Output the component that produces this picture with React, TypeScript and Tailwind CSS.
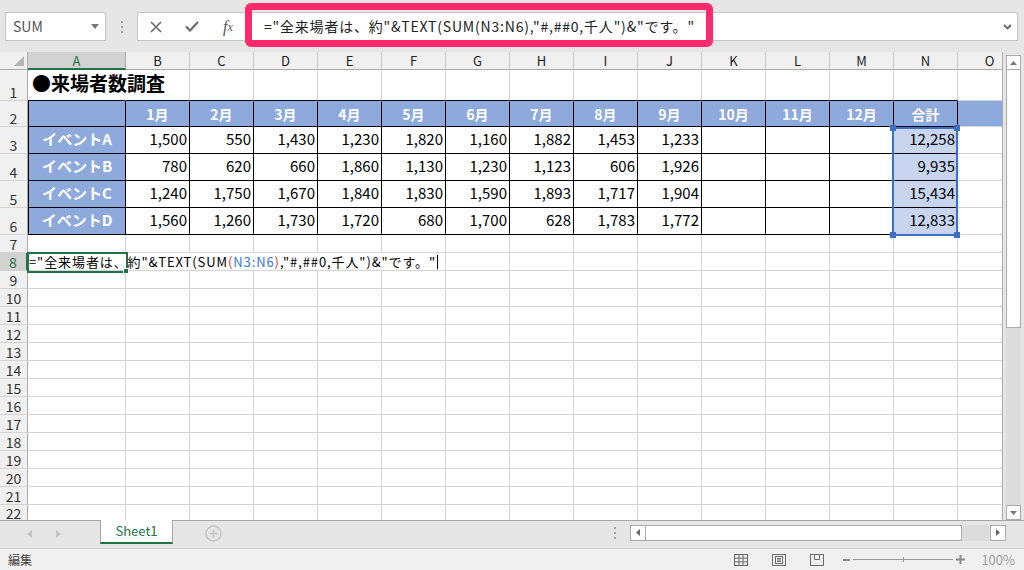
import React from 'react';

const COLS = ['A', 'B', 'C', 'D', 'E', 'F', 'G', 'H', 'I', 'J', 'K', 'L', 'M', 'N', 'O'];
const MONTHS = ['1月', '2月', '3月', '4月', '5月', '6月', '7月', '8月', '9月', '10月', '11月', '12月', '合計'];
const EVENTS: [string, string[]][] = [
  ['イベントA', ['1,500', '550', '1,430', '1,230', '1,820', '1,160', '1,882', '1,453', '1,233', '', '', '', '12,258']],
  ['イベントB', ['780', '620', '660', '1,860', '1,130', '1,230', '1,123', '606', '1,926', '', '', '', '9,935']],
  ['イベントC', ['1,240', '1,750', '1,670', '1,840', '1,830', '1,590', '1,893', '1,717', '1,904', '', '', '', '15,434']],
  ['イベントD', ['1,560', '1,260', '1,730', '1,720', '680', '1,700', '628', '1,783', '1,772', '', '', '', '12,833']],
];
const ROW_COUNT = 22;

/** border colours for a sheet cell: black frame around A2:N6, light gridlines elsewhere */
function borderClass(r: number, c: number) {
  const inTable = r >= 2 && r <= 6 && c <= 13;
  if (inTable && c === 0) return 'border-r border-b border-l border-r-black border-b-black border-l-black';
  if (inTable) return 'border-r border-b border-r-black border-b-black';
  if (r === 1 && c === 0) return 'border-r border-b border-r-white border-b-black';
  if (r === 1 && c <= 13) return 'border-r border-b border-r-[#d4d4d4] border-b-black';
  return 'border-r border-b border-r-[#d4d4d4] border-b-[#d4d4d4]';
}

function CellContent({ r, c }: { r: number; c: number }) {
  if (r === 1 && c === 0) {
    return (
      <div className="relative z-10 flex h-full items-end whitespace-nowrap pb-[5px] pl-[4px] text-[19px] font-bold leading-[24px]">
        ●来場者数調査
      </div>
    );
  }
  if (r === 2) {
    return (
      <div className="flex h-full items-end justify-center bg-[#8ea9db] pb-[2px] text-[14px] font-bold leading-[20px] text-white">
        {c === 0 ? '' : MONTHS[c - 1]}
      </div>
    );
  }
  if (r >= 3 && r <= 6) {
    const [name, vals] = EVENTS[r - 3];
    if (c === 0) {
      return (
        <div className="flex h-full items-end justify-center bg-[#8ea9db] pb-[4px] text-[15px] font-bold leading-[20px] text-white">
          {name}
        </div>
      );
    }
    if (c <= 13) {
      return (
        <div
          className={
            c === 13
              ? 'flex h-full items-end justify-end bg-[#c9d5ee] pb-[4px] pr-[2px] text-[15px] leading-[20px] text-black'
              : 'flex h-full items-end justify-end pb-[4px] pr-[2px] text-[15px] leading-[20px] text-black'
          }
        >
          {vals[c - 1]}
        </div>
      );
    }
  }
  if (r === 8 && c === 0) {
    return (
      <span className="absolute left-[1px] top-0 z-10 flex h-[17px] items-start whitespace-nowrap bg-white pr-[2px] pt-[1px] text-[13px] leading-[16px] tracking-[0.9px] text-black">
        ="全来場者は、約"&amp;TEXT(SUM<span className="text-[#d2343c]">(</span>
        <span className="text-[#3a78d8]">N3:N6</span>
        <span className="text-[#d2343c]">)</span>,"#,##0,千人")&amp;"です。"
        <span className="ml-[1px] mt-[1px] inline-block h-[14px] w-px bg-black" />
      </span>
    );
  }
  return null;
}

function Sheet() {
  const cells: React.ReactNode[] = [];
  cells.push(
    <div key="corner" className="relative border-b border-r border-b-[#ababab] border-r-[#ababab] bg-[#f0f0f0]">
      <svg className="absolute bottom-[3px] right-[3px]" width="10" height="10" viewBox="0 0 10 10">
        <path d="M10 0V10H0Z" fill="#b4b4b4" />
      </svg>
    </div>
  );
  COLS.forEach((l, i) =>
    cells.push(
      <div
        key={`h${l}`}
        className={
          i === 0
            ? 'flex items-center justify-center border-b-2 border-r border-b-[#217346] border-r-[#ababab] bg-[#d2d2d2] text-[13px] leading-none text-[#217346]'
            : 'flex items-center justify-center border-b border-r border-b-[#ababab] border-r-[#c8c8c8] bg-[#f0f0f0] text-[13px] leading-none text-[#222]'
        }
      >
        {l}
      </div>
    )
  );
  for (let r = 1; r <= ROW_COUNT; r++) {
    cells.push(
      <div
        key={`r${r}`}
        className={
          r === 8
            ? 'flex items-end justify-center overflow-hidden border-b border-r-2 border-b-[#d4d4d4] border-r-[#217346] bg-[#d2d2d2] text-[14px] leading-[16px] text-[#217346]'
            : 'flex items-end justify-center overflow-hidden border-b border-r border-b-[#d4d4d4] border-r-[#ababab] bg-[#f0f0f0] text-[14px] leading-[16px] text-[#333]'
        }
      >
        {r}
      </div>
    );
    for (let c = 0; c < COLS.length; c++) {
      cells.push(
        <div key={`c${r}-${c}`} className={`relative ${borderClass(r, c)}`}>
          <CellContent r={r} c={c} />
        </div>
      );
    }
  }

  return (
    <div className="relative h-[468px] w-[1003px] overflow-hidden border-r border-r-[#ababab] bg-white">
      <div className="grid w-max grid-cols-[28px_98px_repeat(13,64px)_64px] grid-rows-[18px_31px_26px_27px_27px_27px_27px_repeat(15,18px)]">
        {cells}
      </div>
      {/* referenced range N3:N6 */}
      <div className="pointer-events-none absolute left-[892px] top-[75px] z-20 h-[109px] w-[66px] border-2 border-[#3a70c8]">
        <div className="absolute -left-[4px] -top-[4px] h-[6px] w-[6px] bg-[#3a70c8]" />
        <div className="absolute -right-[4px] -top-[4px] h-[6px] w-[6px] bg-[#3a70c8]" />
        <div className="absolute -bottom-[4px] -left-[4px] h-[6px] w-[6px] bg-[#3a70c8]" />
        <div className="absolute -bottom-[4px] -right-[4px] h-[6px] w-[6px] bg-[#3a70c8]" />
      </div>
      {/* active cell A8 */}
      <div className="pointer-events-none absolute left-[27px] top-[200px] z-20 h-[21px] w-[101px] border-2 border-[#217346]">
        <div className="absolute -bottom-[3px] -right-[3px] h-[6px] w-[6px] border border-white bg-[#217346]" />
      </div>
    </div>
  );
}

function VScroll() {
  return (
    <div className="flex h-[468px] flex-1 flex-col bg-[#e6e6e6] pl-[3px] pr-[3px] pt-[3px]">
      <div className="flex flex-1 flex-col bg-[#dcdcdc]">
        <div className="flex h-[15px] items-center justify-center border border-[#ababab] bg-white">
          <svg width="7" height="4" viewBox="0 0 7 4">
            <path d="M0 4L3.5 0L7 4Z" fill="#777" />
          </svg>
        </div>
        <div className="h-[258px] border border-t-0 border-[#ababab] bg-white" />
        <div className="flex-1" />
        <div className="flex h-[15px] items-center justify-center border border-[#ababab] bg-white">
          <svg width="7" height="4" viewBox="0 0 7 4">
            <path d="M0 0L3.5 4L7 0Z" fill="#777" />
          </svg>
        </div>
      </div>
    </div>
  );
}

function FormulaToolbar() {
  return (
    <div className="relative flex h-[52px] items-start bg-[#e6e6e6] pl-[5px] pt-[12px]">
      <div className="flex h-[29px] w-[101px] items-center justify-between border border-[#c6c6c6] bg-white pl-[7px] pr-[6px]">
        <span className="text-[14px] text-[#555]">SUM</span>
        <svg width="8" height="5" viewBox="0 0 8 5">
          <path d="M0 0H8L4 5Z" fill="#777" />
        </svg>
      </div>
      <div className="flex h-[29px] w-[31px] flex-col items-center justify-center gap-[3px]">
        <span className="h-[2px] w-[2px] bg-[#a6a6a6]" />
        <span className="h-[2px] w-[2px] bg-[#a6a6a6]" />
        <span className="h-[2px] w-[2px] bg-[#a6a6a6]" />
      </div>
      <div className="mr-[6px] flex h-[29px] flex-1 items-center border border-[#c6c6c6] bg-white">
        <div className="flex h-full w-[36px] items-center justify-center">
          <svg width="12" height="12" viewBox="0 0 12 12">
            <path d="M1 1L11 11M11 1L1 11" stroke="#6b6b6b" strokeWidth="1.6" />
          </svg>
        </div>
        <div className="flex h-full w-[36px] items-center justify-center">
          <svg width="14" height="11" viewBox="0 0 14 11">
            <path d="M1 5.5L5 9.5L13 1" stroke="#6b6b6b" strokeWidth="2.2" fill="none" />
          </svg>
        </div>
        <div className="flex h-full w-[36px] items-center justify-center font-['Liberation_Serif',serif] text-[16px] italic text-[#555]">
          f<span className="text-[12px]">x</span>
        </div>
        <div className="flex-1 whitespace-nowrap pl-[18px] text-[14px] tracking-[0.8px] text-[#222]">
          ="全来場者は、約"&amp;TEXT(SUM(N3:N6),"#,##0,千人")&amp;"です。"
        </div>
        <div className="pr-[5px]">
          <svg width="9" height="6" viewBox="0 0 9 6">
            <path d="M1 1L4.5 4.5L8 1" stroke="#666" strokeWidth="1.8" fill="none" />
          </svg>
        </div>
      </div>
      {/* annotation highlight */}
      <div className="pointer-events-none absolute left-[245px] top-[3px] h-[44px] w-[468px] rounded-[6px] border-[7px] border-[#fe2a6c]" />
    </div>
  );
}

function TabBar() {
  return (
    <div className="flex h-[28px] items-start border-t border-t-[#a6a6a6] bg-[#e6e6e6]">
      <div className="flex h-[27px] w-[100px] items-center pb-[2px]">
        <svg className="ml-[27px]" width="5" height="8" viewBox="0 0 5 8">
          <path d="M5 0V8L0 4Z" fill="#c4c4c4" />
        </svg>
        <svg className="ml-[24px]" width="5" height="8" viewBox="0 0 5 8">
          <path d="M0 0V8L5 4Z" fill="#c4c4c4" />
        </svg>
      </div>
      <div className="-mt-px flex h-[24px] w-[73px] items-center justify-center border-x border-b-2 border-x-[#a6a6a6] border-b-[#217346] bg-white text-[13px] text-[#217346]">
        Sheet1
      </div>
      <div className="ml-[32px] flex h-[27px] items-center pb-[2px]">
        <svg width="17" height="17" viewBox="0 0 17 17">
          <circle cx="8.5" cy="8.5" r="7.5" stroke="#c4c4c4" strokeWidth="1.4" fill="none" />
          <path d="M8.5 4.5V12.5M4.5 8.5H12.5" stroke="#c4c4c4" strokeWidth="1.6" />
        </svg>
      </div>
      <div className="flex-1" />
      <div className="flex h-[27px] items-center pb-[4px]">
        <div className="flex flex-col gap-[3px]">
          <span className="h-[2px] w-[2px] bg-[#a6a6a6]" />
          <span className="h-[2px] w-[2px] bg-[#a6a6a6]" />
          <span className="h-[2px] w-[2px] bg-[#a6a6a6]" />
        </div>
        <div className="ml-[14px] flex h-[16px] w-[16px] items-center justify-center border border-[#ababab] bg-white">
          <svg width="4" height="7" viewBox="0 0 4 7">
            <path d="M4 0V7L0 3.5Z" fill="#666" />
          </svg>
        </div>
        <div className="h-[16px] w-[316px] border border-l-0 border-[#ababab] bg-white" />
        <div className="h-[16px] w-[27px] bg-[#dcdcdc]" />
        <div className="ml-[1px] flex h-[16px] w-[16px] items-center justify-center border border-[#ababab] bg-white">
          <svg width="4" height="7" viewBox="0 0 4 7">
            <path d="M0 0V7L4 3.5Z" fill="#666" />
          </svg>
        </div>
      </div>
      <div className="w-[18px]" />
    </div>
  );
}

function StatusBar() {
  return (
    <div className="flex h-[22px] items-center border-t border-t-[#d0d0d0] bg-[#f0f0f0] pl-[8px] pr-[9px]">
      <span className="text-[12px] text-[#444]">編集</span>
      <div className="flex-1" />
      <svg width="14" height="12" viewBox="0 0 14 12">
        <rect x="0.5" y="0.5" width="13" height="11" fill="none" stroke="#6b6b6b" />
        <path d="M5 0.5V11.5M9 0.5V11.5M0.5 4.2H13.5M0.5 7.8H13.5" stroke="#6b6b6b" />
      </svg>
      <svg className="ml-[24px]" width="14" height="12" viewBox="0 0 14 12">
        <rect x="0.5" y="0.5" width="13" height="11" fill="none" stroke="#6b6b6b" />
        <rect x="3.5" y="2.5" width="7" height="7" fill="none" stroke="#6b6b6b" />
        <path d="M5 4.5H9M5 6H9M5 7.5H9" stroke="#6b6b6b" />
      </svg>
      <svg className="ml-[24px]" width="14" height="12" viewBox="0 0 14 12">
        <rect x="0.5" y="0.5" width="13" height="11" fill="none" stroke="#6b6b6b" />
        <path d="M4.5 0.5V5.5H9.5V0.5" fill="none" stroke="#6b6b6b" />
      </svg>
      <span className="ml-[19px] h-[2px] w-[7px] bg-[#8a8a8a]" />
      <div className="relative ml-[3px] h-px w-[100px] bg-[#9a9a9a]">
        <span className="absolute left-[50px] top-[-2px] h-[5px] w-px bg-[#9a9a9a]" />
      </div>
      <svg className="ml-[3px]" width="9" height="9" viewBox="0 0 9 9">
        <path d="M4.5 0V9M0 4.5H9" stroke="#8a8a8a" strokeWidth="2" />
      </svg>
      <span className="ml-[16px] text-[13px] text-[#a0a0a0]">100%</span>
    </div>
  );
}

export default function App() {
  return (
    <div className="flex h-[570px] w-[1024px] flex-col overflow-hidden bg-[#e6e6e6] font-['Noto_Sans_CJK_JP',sans-serif]">
      <FormulaToolbar />
      <div className="flex h-[468px]">
        <Sheet />
        <VScroll />
      </div>
      <TabBar />
      <StatusBar />
    </div>
  );
}
